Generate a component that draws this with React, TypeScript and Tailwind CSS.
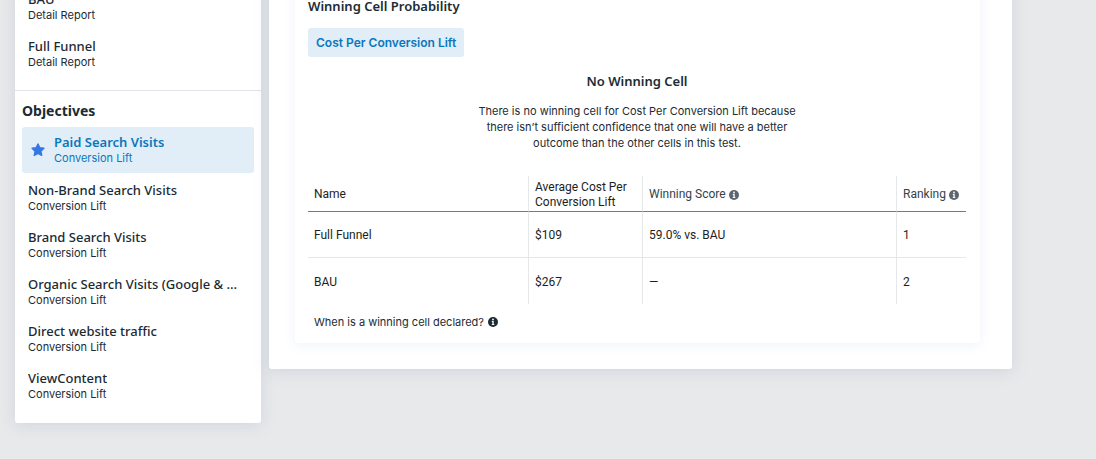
import clsx from "clsx";

interface NavItem {
  title: string;
  subtitle: string;
  active?: boolean;
}

interface ResultRow {
  name: string;
  cost: string;
  score: string;
  ranking: number;
}

const REPORTS: NavItem[] = [
  { title: "BAU", subtitle: "Detail Report" },
  { title: "Full Funnel", subtitle: "Detail Report" },
];

const OBJECTIVES: NavItem[] = [
  { title: "Paid Search Visits", subtitle: "Conversion Lift", active: true },
  { title: "Non-Brand Search Visits", subtitle: "Conversion Lift" },
  { title: "Brand Search Visits", subtitle: "Conversion Lift" },
  { title: "Organic Search Visits (Google & ...", subtitle: "Conversion Lift" },
  { title: "Direct website traffic", subtitle: "Conversion Lift" },
  { title: "ViewContent", subtitle: "Conversion Lift" },
];

const ROWS: ResultRow[] = [
  { name: "Full Funnel", cost: "$109", score: "59.0% vs. BAU", ranking: 1 },
  { name: "BAU", cost: "$267", score: "—", ranking: 2 },
];

const StarIcon = () => (
  <svg viewBox="0 0 16 16" className="size-4 shrink-0" aria-hidden="true">
    <path
      d="M8 2l1.8 3.8 4.1.5-3 2.9.8 4.2L8 11.4l-3.7 2 .8-4.2-3-2.9 4.1-.5z"
      fill="#3578e5"
      stroke="#3578e5"
      strokeWidth="1.4"
      strokeLinejoin="round"
    />
  </svg>
);

const InfoIcon = ({ className }: { className?: string }) => (
  <svg viewBox="0 0 10 10" className={clsx("size-[10px] shrink-0", className)} aria-hidden="true">
    <circle cx="5" cy="5" r="5" fill="currentColor" />
    <circle cx="5" cy="2.5" r="0.9" fill="#fff" />
    <path d="M3.8 4.1h1.9v2.9h.6v.9H3.8V7h.6V5h-.6z" fill="#fff" />
  </svg>
);

function NavLink({ item }: { item: NavItem }) {
  return (
    <a
      href="#"
      aria-current={item.active ? "page" : undefined}
      className={clsx(
        "flex items-center rounded-[3px] py-[7px]",
        item.active ? "mb-px gap-2 bg-[#e1edf7] pl-2 text-[#0a78be]" : "pl-[6px] text-[#1c2b33]",
      )}
    >
      {item.active && <StarIcon />}
      <span className="flex min-w-0 flex-col">
        <span
          className={clsx(
            "truncate font-['Noto_Sans',sans-serif] text-[13px] leading-4",
            item.active ? "font-semibold" : "font-medium",
          )}
        >
          {item.title}
        </span>
        <span className="text-[11px] leading-4">{item.subtitle}</span>
      </span>
    </a>
  );
}

function Sidebar() {
  return (
    <aside className="w-[246px] shrink-0 rounded-[3px] bg-white pb-[14px] shadow-[0_2px_16px_rgba(120,140,180,0.22)]">
      <nav className="flex flex-col gap-px border-b border-[#e1e4e8] px-[7px] pb-[13px]">
        {REPORTS.map((item) => (
          <NavLink key={item.title} item={item} />
        ))}
      </nav>
      <h2 className="mt-[10px] px-[7px] font-['Noto_Sans',sans-serif] text-[14px] leading-5 font-bold">
        Objectives
      </h2>
      <nav className="mt-[6px] flex flex-col gap-px px-[7px]">
        {OBJECTIVES.map((item) => (
          <NavLink key={item.title} item={item} />
        ))}
      </nav>
    </aside>
  );
}

function ResultsTable() {
  const cell = "border-l border-[#e6e7e8] px-[6px] pt-0.5 first:border-l-0";
  const head = "h-9 border-b border-b-[#77797b] text-left font-normal";

  return (
    <table className="mt-[25px] w-full table-fixed border-separate border-spacing-0 font-[Roboto,sans-serif] text-[12px] leading-[15px] text-[#1c1e21]">
      <colgroup>
        <col className="w-[220px]" />
        <col className="w-[114px]" />
        <col />
        <col className="w-[70px]" />
      </colgroup>
      <thead>
        <tr>
          <th scope="col" className={clsx(cell, head)}>Name</th>
          <th scope="col" className={clsx(cell, head)}>Average Cost Per Conversion Lift</th>
          <th scope="col" className={clsx(cell, head)}>
            <span className="flex items-center gap-[3px] text-[#34434c]">
              Winning Score <InfoIcon className="text-[#5c6670]" />
            </span>
          </th>
          <th scope="col" className={clsx(cell, head)}>
            <span className="flex items-center gap-[3px] text-[#34434c]">
              Ranking <InfoIcon className="text-[#5c6670]" />
            </span>
          </th>
        </tr>
      </thead>
      <tbody className="[&>tr:first-child>td]:border-b">
        {ROWS.map((row) => (
          <tr key={row.name}>
            <td className={clsx(cell, "h-[46px]")}>{row.name}</td>
            <td className={cell}>{row.cost}</td>
            <td className={cell}>{row.score}</td>
            <td className={cell}>{row.ranking}</td>
          </tr>
        ))}
      </tbody>
    </table>
  );
}

export default function App() {
  return (
    <div className="min-h-screen overflow-hidden bg-[#e8e9ea] font-[Inter,sans-serif] text-[#1c2b33]">
      <div className="-mt-4 flex items-start gap-2 pr-[84px] pl-[15px]">
        <Sidebar />
        <main className="min-w-0 flex-1 rounded-[3px] bg-white pr-8 pb-[26px] pl-[26px] shadow-[0_2px_16px_rgba(120,140,180,0.22)]">
          <section className="rounded-[3px] bg-white pt-3 pr-[14px] pb-[13px] pl-[13px] shadow-[0_2px_12px_rgba(100,130,220,0.1)]">
            <h2 className="font-['Noto_Sans',sans-serif] text-[13px] leading-5 font-semibold">
              Winning Cell Probability
            </h2>
            <button
              type="button"
              className="mt-3 block rounded-[3px] bg-[#e1edf7] px-2 py-[6px] text-[12px] leading-[17px] font-semibold text-[#0a78be]"
            >
              Cost Per Conversion Lift
            </button>
            <div className="mt-[14px] text-center">
              <h3 className="font-['Noto_Sans',sans-serif] text-[13px] leading-5 font-semibold">
                No Winning Cell
              </h3>
              <p className="mx-auto mt-3 max-w-[330px] text-[11px] leading-4">
                There is no winning cell for Cost Per Conversion Lift because there isn’t sufficient
                confidence that one will have a better outcome than the other cells in this test.
              </p>
            </div>
            <ResultsTable />
            <p className="mt-[10px] flex items-center gap-1 px-[6px] text-[11px] leading-4">
              When is a winning cell declared? <InfoIcon />
            </p>
          </section>
        </main>
      </div>
    </div>
  );
}
